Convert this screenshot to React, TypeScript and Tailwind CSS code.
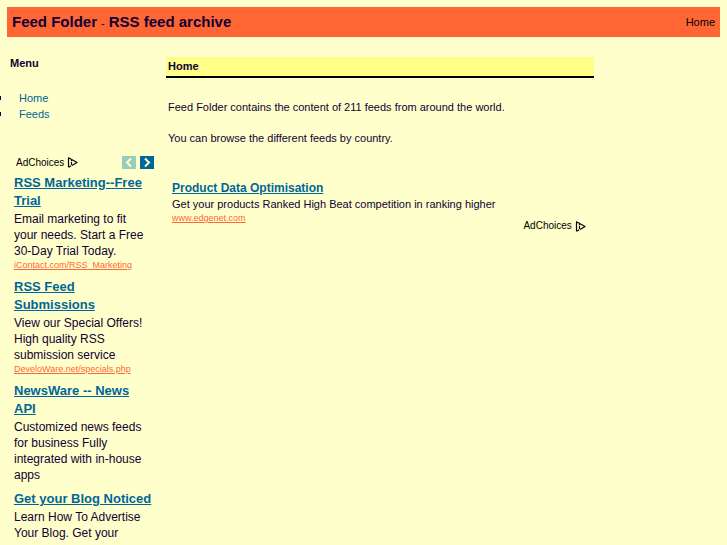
import React from 'react';

interface Ad {
  id: number;
  title: string;
  text: string;
  url?: string;
}

const menuItems = ['Home', 'Feeds'];

const sideAds: Ad[] = [
  {
    id: 1,
    title: 'RSS Marketing--Free\nTrial',
    text: 'Email marketing to fit\nyour needs. Start a Free\n30-Day Trial Today.',
    url: 'iContact.com/RSS_Marketing',
  },
  {
    id: 2,
    title: 'RSS Feed\nSubmissions',
    text: 'View our Special Offers!\nHigh quality RSS\nsubmission service',
    url: 'DeveloWare.net/specials.php',
  },
  {
    id: 3,
    title: 'NewsWare -- News\nAPI',
    text: 'Customized news feeds\nfor business Fully\nintegrated with in-house\napps',
  },
  {
    id: 4,
    title: 'Get your Blog Noticed',
    text: 'Learn How To Advertise\nYour Blog. Get your',
  },
];

const AdChoices: React.FC = () => (
  <a href="#" className="flex items-center gap-[3px] text-[10px] leading-3 text-black">
    AdChoices
    <svg width="11" height="11" viewBox="0 0 11 11" fill="none" stroke="#000" strokeWidth="1.2" aria-hidden="true">
      <path d="M1.5 10.2V0.8L10 5.5L5 8.4" strokeLinejoin="round" />
      <path d="M1.5 10.2L4.2 8.8M4.5 5V8M4.5 3V4.2" />
    </svg>
  </a>
);

// Previous / next buttons above the side ads
const Arrow: React.FC<{ label: string; className: string; d: string }> = ({ label, className, d }) => (
  <button type="button" aria-label={label} className={`h-[13px] w-[14px] ${className}`}>
    <svg width="14" height="13" viewBox="0 0 14 13" fill="none" stroke="#ffffcc" strokeWidth="2">
      <path d={d} />
    </svg>
  </button>
);

const App: React.FC = () => {
  return (
    <div className="h-screen overflow-hidden bg-[#ffffcc] p-[7px] font-['Liberation_Sans',Arial,sans-serif] text-[11px] text-[#110033]">
      <header className="flex h-[30px] items-center justify-between bg-[#ff6633] px-[5px]">
        <div className="flex items-baseline gap-1">
          <h1 className="text-[15px] font-bold leading-5">Feed Folder</h1>
          <span>-</span>
          <h2 className="text-[15px] font-bold leading-5">RSS feed archive</h2>
        </div>
        <a href="#" className="text-black">Home</a>
      </header>

      <div className="flex">
        <aside className="w-[159px] shrink-0 pt-[18px]">
          <h3 className="pl-[3px] font-bold leading-4">Menu</h3>
          <ul className="-ml-[7px] mt-[19px] leading-4 text-[#006699]">
            {menuItems.map((item) => (
              <li key={item} className="flex items-center gap-[18px]">
                <span className="h-1 w-px bg-[#110033]" />
                <a href="#">{item}</a>
              </li>
            ))}
          </ul>

          <div className="mt-[34px] flex items-center justify-between pl-[9px] pr-3">
            <AdChoices />
            <div className="flex gap-1">
              <Arrow label="Previous" className="bg-[#99ccbb]" d="M9 2.5L5 6.5L9 10.5" />
              <Arrow label="Next" className="bg-[#006699]" d="M5 2.5L9 6.5L5 10.5" />
            </div>
          </div>
          <ul className="mt-[5px] flex flex-col gap-[7px] whitespace-pre-line pl-[7px]">
            {sideAds.map((ad) => (
              <li key={ad.id}>
                <a href="#" className="block text-[13px] font-bold leading-[18px] text-[#006699] underline">{ad.title}</a>
                <p className="pt-px text-[12px] leading-4">{ad.text}</p>
                {ad.url && <a href="#" className="block text-[9px] leading-3 text-[#ff6633] underline">{ad.url}</a>}
              </li>
            ))}
          </ul>
        </aside>

        <main className="w-[60%] pt-5">
          <h2 className="border-b-2 border-black bg-[#ffff88] px-[2px] pb-px font-bold leading-[18px]">Home</h2>
          <div className="mt-[21px] space-y-[15px] px-[2px] leading-4">
            <p>Feed Folder contains the content of 211 feeds from around the world.</p>
            <p>You can browse the different feeds by country.</p>
          </div>
          <div className="mt-[34px] px-[6px]">
            <a href="#" className="block text-[12px] font-bold leading-4 text-[#006699] underline">Product Data Optimisation</a>
            <p className="leading-4">Get your products Ranked High Beat competition in ranking higher</p>
            <a href="#" className="block text-[9px] leading-3 text-[#ff6633] underline">www.edgenet.com</a>
          </div>
          <div className="-mt-1 flex justify-end pr-2">
            <AdChoices />
          </div>
        </main>
      </div>
    </div>
  );
};

export default App;
